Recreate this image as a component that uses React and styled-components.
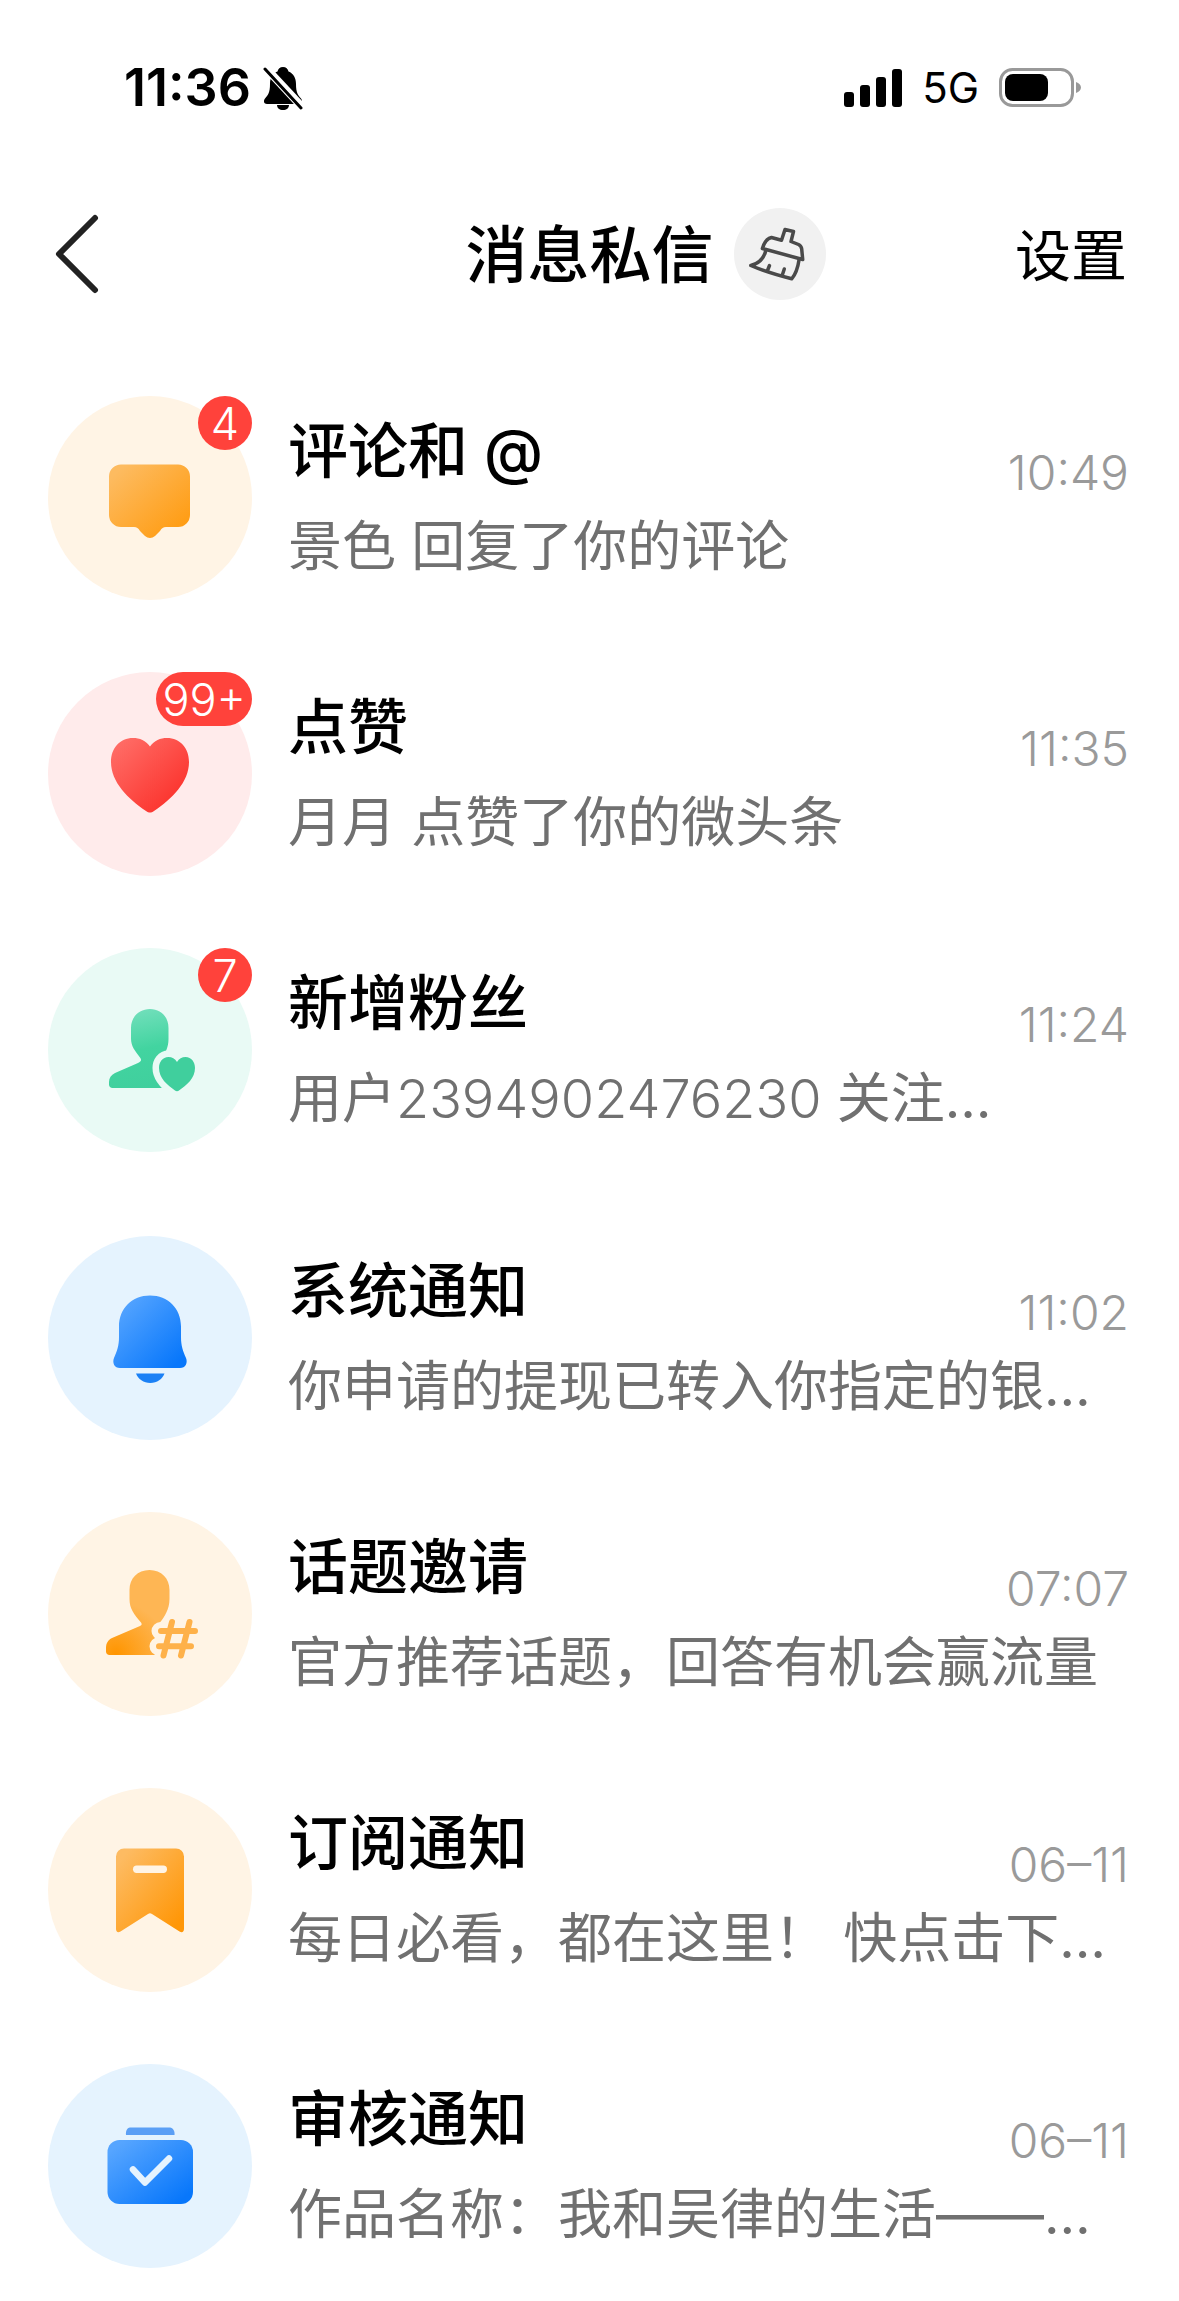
import React from "react";
import styled, { createGlobalStyle } from "styled-components";

const GlobalStyle = createGlobalStyle`
  * {
    box-sizing: border-box;
  }
  body {
    margin: 0;
    background: #fff;
    color: #000;
    font-family: Inter, "Noto Sans CJK SC", sans-serif;
  }
`;

const Page = styled.div`
  width: 100%;
  overflow-x: hidden;
`;

const StatusBar = styled.div`
  display: flex;
  align-items: center;
  justify-content: space-between;
  height: 176px;
  padding: 0 98px 0 124px;
`;
const StatusGroup = styled.div`
  display: flex;
  align-items: center;
  gap: ${(props) => props.$gap}px;
`;
const Clock = styled.span`
  font-size: 52px;
  font-weight: 600;
  line-height: 60px;
`;
const Network = styled.span`
  font-size: 42px;
  font-weight: 400;
  line-height: 48px;
`;

const Header = styled.header`
  display: grid;
  grid-template-columns: 1fr auto 1fr;
  align-items: center;
  height: 156px;
  padding: 0 52px;
`;
const IconButton = styled.button`
  display: flex;
  padding: 0;
  border: 0;
  background: none;
  cursor: pointer;
`;
const HeaderActions = styled.div`
  display: flex;
  align-items: center;
  justify-content: space-between;
  padding-left: 20px;
`;
const PageTitle = styled.h1`
  margin: 0;
  padding-top: 4px;
  font-size: 62px;
  font-weight: 500;
  line-height: 92px;
`;
const CleanButton = styled(IconButton)`
  border-radius: 50%;
  background: #f1f1f1;
`;
const SettingsButton = styled.button`
  padding: 4px 0 0;
  border: 0;
  background: none;
  color: #000;
  font: inherit;
  font-size: 56px;
  line-height: 84px;
  cursor: pointer;
`;

const Main = styled.main`
  display: flex;
  flex-direction: column;
  gap: 84px;
  padding: 64px 50px 32px 48px;
`;
const MessageList = styled.ul`
  display: flex;
  flex-direction: column;
  gap: 72px;
  margin: 0;
  padding: 0;
  list-style: none;
`;
const MessageRow = styled.a`
  display: flex;
  gap: 36px;
  color: inherit;
  text-decoration: none;
`;
const Avatar = styled.div`
  position: relative;
  flex: none;
  width: 204px;
  height: 204px;
  border-radius: 50%;
  background: ${(props) => props.$color};

  svg {
    display: block;
  }
`;
const Badge = styled.span`
  position: absolute;
  top: 0;
  right: 0;
  display: flex;
  align-items: center;
  justify-content: center;
  min-width: 54px;
  height: 54px;
  padding: 0 6px;
  border-radius: 27px;
  background: #ff423b;
  color: #fff;
  font-size: 45px;
  font-weight: 350;
`;
const MessageBody = styled.div`
  flex: 1;
  min-width: 0;
  display: grid;
  grid-template-columns: 1fr auto;
  grid-template-rows: 86px 78px;
  row-gap: 14px;
  padding-top: 12px;
`;
const MessageTitle = styled.h2`
  margin: 0;
  font-size: 60px;
  font-weight: 500;
  line-height: 86px;
`;
const MessageTime = styled.time`
  align-self: end;
  color: #9a9a9a;
  font-size: 48px;
  font-weight: 350;
  line-height: 42px;
`;
const MessageText = styled.p`
  grid-column: 1 / -1;
  margin: 0;
  overflow: hidden;
  color: #707070;
  font-size: 54px;
  font-weight: 400;
  line-height: 78px;
  white-space: nowrap;
`;
const UserId = styled.span`
  font-weight: 350;
`;

const MutedBell = () => (
  <svg width="40" height="44" viewBox="0 0 40 44" aria-hidden="true">
    <path d="M20 1c3 0 5 2 5.500 4.500 5 2 7.500 6.500 7.500 12.500 0 9 2 11 5 14.500 2 2.500 1 5.500-2 5.500H4c-3 0-4-3-2-5.500C5 29 7 27 7 18 7 12 9.500 7.500 14.500 5.500 15 3 17 1 20 1z" />
    <path d="M14 39h12c0 3-2.500 5-6 5s-6-2-6-5z" />
    <path d="M1 0l40 43" stroke="#fff" strokeWidth="8" />
    <path d="M2 3l36 39" stroke="#000" strokeWidth="3" strokeLinecap="round" />
  </svg>
);

const Signal = () => (
  <svg width="58" height="38" viewBox="0 0 58 38" aria-hidden="true">
    <rect x="0" y="23" width="10" height="15" rx="3" />
    <rect x="16" y="16" width="10" height="22" rx="3" />
    <rect x="32" y="8" width="10" height="30" rx="3" />
    <rect x="48" y="0" width="10" height="38" rx="3" />
  </svg>
);

const Battery = () => (
  <svg width="82" height="40" viewBox="0 0 82 40" aria-hidden="true">
    <rect x="1.500" y="1.500" width="72" height="36" rx="12" fill="none" stroke="#999" strokeWidth="3" />
    <rect x="6" y="6" width="43" height="27" rx="8" />
    <path d="M77 14c3 1 5 3 5 5.500s-2 4.500-5 5.500z" fill="#999" />
  </svg>
);

const BackArrow = () => (
  <svg width="50" height="80" viewBox="0 0 50 80" fill="none" aria-hidden="true">
    <path d="M43 4L7 40l36 36" stroke="#222" strokeWidth="6" strokeLinecap="round" strokeLinejoin="round" />
  </svg>
);

const Broom = () => (
  <svg width="92" height="92" viewBox="0 0 92 92" fill="none" stroke="#4a4a4a" strokeWidth="3.500" strokeLinejoin="round" strokeLinecap="round" aria-hidden="true">
    <path d="M28.400 40.500C30 35 33 30.500 37.500 29.500L47.500 32.300 51 21.500l8.500 2L57 33.500l7.500 3c2 1 3 2.500 3.200 4.500l1 10.500z" />
    <path d="M31.800 42.500C30 50 25 55.500 16.800 57.500 27 62 43 67 57.700 70.800 62 66 64 59 65.200 51" />
    <path d="M33.500 62.500l2-5M48.300 67l2-6" />
  </svg>
);

const Gradient = ({ id, from, to }) => (
  <defs>
    <linearGradient id={id} x1="0.100" y1="0.100" x2="0.900" y2="0.900">
      <stop offset="0" stopColor={from} />
      <stop offset="1" stopColor={to} />
    </linearGradient>
  </defs>
);

const CommentIcon = () => (
  <svg width="204" height="204" viewBox="0 0 204 204" aria-hidden="true">
    <Gradient id="comment" from="#fdbb60" to="#ff9c12" />
    <path fill="url(#comment)" d="M73 68.500h57a12 12 0 0 1 12 12V119a12 12 0 0 1-12 12h-12c-3 0-4 1-6 4l-5 5c-3 2.500-7 2.500-10 0l-5-5c-2-3-3-4-6-4H73a12 12 0 0 1-12-12V80.500a12 12 0 0 1 12-12z" />
  </svg>
);

const LikeIcon = () => (
  <svg width="204" height="204" viewBox="0 0 204 204" aria-hidden="true">
    <Gradient id="like" from="#ff6a64" to="#fb2f29" />
    <path fill="url(#like)" d="M102 74.500C106 68.500 112.500 66 119 66c13 0 22 10 22 24 0 20-17 37-35 49-3 2-5 2-8 0C80 127 63 110 63 90c0-14 9-24 22-24 6.500 0 13 2.500 17 8.500z" />
  </svg>
);

const FollowerIcon = () => (
  <svg width="204" height="204" viewBox="0 0 204 204" aria-hidden="true">
    <defs>
      <linearGradient id="follower" x1="0.400" y1="0" x2="0.600" y2="1">
        <stop offset="0" stopColor="#72dfbb" />
        <stop offset="0.500" stopColor="#42d4a0" />
        <stop offset="1" stopColor="#40cf9d" />
      </linearGradient>
    </defs>
    <path fill="url(#follower)" d="M102 61c11 0 18.500 8 18.500 19v11c0 8-3 14-7 19-2 3-1 5 2 6l20 9v15H64.500c-2 0-3.500-1.500-3.500-3.500V134c0-4 2-7 6-9l23-10c3-1.500 4-3 2-5.500-5-7-9-11-9-19V80c0-11 8-19 19-19z" />
    <path fill="#40cf9d" stroke="#e9faf5" strokeWidth="13" paintOrder="stroke" d="M129 114c2-3.500 5-5 8.500-5 6 0 9.500 5 9.500 11 0 10-8 17-16 22.500-1 1-3 1-4 0C119 137 111 130 111 120c0-6 3.500-11 9.500-11 3.500 0 6.500 1.500 8.500 5z" />
  </svg>
);

const BellIcon = () => (
  <svg width="204" height="204" viewBox="0 0 204 204" aria-hidden="true">
    <Gradient id="bell" from="#56a5ff" to="#0877fb" />
    <path fill="url(#bell)" d="M102 59.500c18 0 31 13 31 31V101c0 9 2 14 5 21 2 5-.500 10-6 10H72c-5.500 0-8-5-6-10 3-7 5-12 5-21V90.500c0-18 13-31 31-31z" />
    <path fill="#1b80f5" d="M88 137.500h28.500c-2 5.500-7.500 9.500-14.200 9.500S90 143 88 137.500z" />
  </svg>
);

const TopicIcon = () => (
  <svg width="204" height="204" viewBox="0 0 204 204" aria-hidden="true">
    <defs>
      <radialGradient id="topic" gradientUnits="userSpaceOnUse" cx="68" cy="142" r="52">
        <stop offset="0" stopColor="#ff9500" />
        <stop offset="1" stopColor="#feb654" />
      </radialGradient>
    </defs>
    <path fill="url(#topic)" d="M101.500 58c12 0 20 8.500 20 20v9c0 10-5 18-10 24v32H61.500c-2 0-3.500-1.500-3.500-3.500V136c0-5 2-8 6-10l28-12c2-1 2-2 1-3.500C86 102 81.500 97 81.500 87v-9c0-11.500 8-20 20-20z" />
    <g fill="none" strokeLinecap="round">
      <path stroke="#fff4e5" strokeWidth="18" d="M112.500 119H147M110.500 134.300H143M124 110l-8.500 33M141.500 110l-8.500 33" />
      <path stroke="#feb14a" strokeWidth="6" d="M113 119h34M111 134.300h32M124 110l-8.500 33.500M141.500 110l-8.500 33.500" />
    </g>
  </svg>
);

const BookmarkIcon = () => (
  <svg width="204" height="204" viewBox="0 0 204 204" aria-hidden="true">
    <Gradient id="bookmark" from="#fdbb62" to="#ff9708" />
    <path fill="url(#bookmark)" d="M76 60.500h52a8 8 0 0 1 8 8V141c0 3-2 4-4.500 2.500L104 126c-1.500-1-2.500-1-4 0l-27.500 17.500C70 145 68 144 68 141V68.500a8 8 0 0 1 8-8z" />
    <rect x="85" y="77.500" width="34" height="7.500" rx="3.700" fill="#fff4e5" />
  </svg>
);

const ReviewIcon = () => (
  <svg width="204" height="204" viewBox="0 0 204 204" aria-hidden="true">
    <Gradient id="review" from="#56a5ff" to="#0877fb" />
    <path fill="#5b9ff5" d="M82 63.500h40c3 0 5 4 4.500 7.500H78c-.500-3.500 1-7.500 4-7.500z" />
    <rect x="59.500" y="76" width="85.500" height="64" rx="12" fill="url(#review)" />
    <path fill="none" stroke="#e5f3fe" strokeWidth="6.500" strokeLinecap="round" strokeLinejoin="round" d="M85 105.500l12 13 24-24" />
  </svg>
);

const interactions = [
  { title: "评论和 @", text: "景色 回复了你的评论", time: "10:49", badge: "4", color: "#fff4e5", Icon: CommentIcon },
  { title: "点赞", text: "月月 点赞了你的微头条", time: "11:35", badge: "99+", color: "#ffebeb", Icon: LikeIcon },
  {
    title: "新增粉丝",
    text: (
      <>
        用户<UserId>2394902476230</UserId> 关注…
      </>
    ),
    time: "11:24",
    badge: "7",
    color: "#e9faf5",
    Icon: FollowerIcon,
  },
];

const notices = [
  { title: "系统通知", text: "你申请的提现已转入你指定的银…", time: "11:02", color: "#e5f3fe", Icon: BellIcon },
  { title: "话题邀请", text: "官方推荐话题，回答有机会赢流量", time: "07:07", color: "#fff4e5", Icon: TopicIcon },
  { title: "订阅通知", text: "每日必看，都在这里！ 快点击下…", time: "06–11", color: "#fff4e5", Icon: BookmarkIcon },
  { title: "审核通知", text: "作品名称：我和吴律的生活——…", time: "06–11", color: "#e5f3fe", Icon: ReviewIcon },
];

const Messages = ({ items }) => (
  <MessageList>
    {items.map(({ title, text, time, badge, color, Icon }) => (
      <li key={title}>
        <MessageRow href="#">
          <Avatar $color={color}>
            <Icon />
            {badge && <Badge>{badge}</Badge>}
          </Avatar>
          <MessageBody>
            <MessageTitle>{title}</MessageTitle>
            <MessageTime>{time}</MessageTime>
            <MessageText>{text}</MessageText>
          </MessageBody>
        </MessageRow>
      </li>
    ))}
  </MessageList>
);

const App = () => {
  return (
    <Page lang="zh-CN">
      <GlobalStyle />
      <StatusBar>
        <StatusGroup $gap={12}>
          <Clock>11:36</Clock>
          <MutedBell />
        </StatusGroup>
        <StatusGroup $gap={20}>
          <Signal />
          <Network>5G</Network>
          <Battery />
        </StatusGroup>
      </StatusBar>
      <Header>
        <IconButton type="button" aria-label="返回">
          <BackArrow />
        </IconButton>
        <PageTitle>消息私信</PageTitle>
        <HeaderActions>
          <CleanButton type="button" aria-label="清除未读">
            <Broom />
          </CleanButton>
          <SettingsButton type="button">设置</SettingsButton>
        </HeaderActions>
      </Header>
      <Main>
        <Messages items={interactions} />
        <Messages items={notices} />
      </Main>
    </Page>
  );
};

export default App;
